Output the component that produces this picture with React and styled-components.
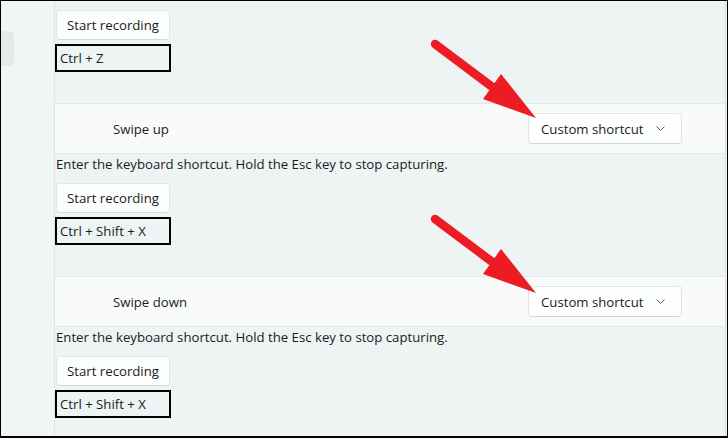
import styled, { createGlobalStyle } from "styled-components";

const GlobalStyle = createGlobalStyle`
    html, body {
        margin: 0;
        padding: 0;
        background: #ffffff;
    }
    * {
        box-sizing: border-box;
    }
`

function Arrow({ top }) {
    return (
        <ArrowBox top={top}>
            <svg width="120" height="90" viewBox="0 0 120 90">
                <line x1="10" y1="8" x2="70" y2="53" stroke="#ed1c24" strokeWidth="8.5" strokeLinecap="round" />
                <polygon points="58,63 76,38 111,82" fill="#ed1c24" />
            </svg>
        </ArrowBox>
    )
}

function Recorder({ keys }) {
    return (
        <>
            <RecordButton>Start recording</RecordButton>
            <KeyBox>{keys}</KeyBox>
        </>
    )
}

function Gesture({ label, keys }) {
    return (
        <Section>
            <Row>
                <RowLabel>{label}</RowLabel>
                <Dropdown>
                    <span>Custom shortcut</span>
                    <svg width="9" height="5" viewBox="0 0 9 5">
                        <polyline points="0.5,0.5 4.5,4.5 8.5,0.5" fill="none" stroke="#5c5c5c" strokeWidth="1" />
                    </svg>
                </Dropdown>
            </Row>
            <Hint>Enter the keyboard shortcut. Hold the Esc key to stop capturing.</Hint>
            <Recorder keys={keys} />
        </Section>
    )
}

export default function App() {
    return (
        <>
            <GlobalStyle />
            <Frame>
                <Sidebar>
                    <Pill />
                </Sidebar>
                <Content>
                    <Recorder keys="Ctrl + Z" />
                    <Gesture label="Swipe up" keys="Ctrl + Shift + X" />
                    <Gesture label="Swipe down" keys="Ctrl + Shift + X" />
                </Content>
                <Arrow top={35} />
                <Arrow top={210} />
            </Frame>
        </>
    )
}

const Frame = styled.div`
    position: relative;
    display: flex;
    width: 728px;
    height: 438px;
    overflow: hidden;
    border: 1px solid #000000;
    border-bottom-width: 2px;
    background: #eef3f3;
    font-family: 'Open Sans', 'Noto Sans', sans-serif;
    font-size: 13.2px;
    color: #1b1b1b;
`
const Sidebar = styled.div`
    width: 54px;
    flex-shrink: 0;
    padding-top: 30px;
    background: #f1f5f5;
    border-right: 1px solid #dfe4e4;
`
const Pill = styled.div`
    width: 13px;
    height: 35px;
    background: #e5e9e9;
    border-radius: 0 5px 5px 0;
`
const Content = styled.div`
    flex: 1;
    display: flex;
    flex-direction: column;
    align-items: flex-start;
    padding: 9px 0 0 0;
    border-right: 1px solid #dcdfdf;
    margin-right: 1px;
    overflow: hidden;
`
const RecordButton = styled.button`
    flex-shrink: 0;
    width: 114px;
    height: 30px;
    margin-left: 1px;
    padding: 0;
    background: #fcfdfd;
    border: 1px solid #e3e6e6;
    border-bottom-color: #d6d9d9;
    border-radius: 4px;
    font-family: inherit;
    font-size: 13.2px;
    color: #1b1b1b;
`
const KeyBox = styled.div`
    flex-shrink: 0;
    width: 116px;
    height: 28px;
    margin-top: 4px;
    margin-bottom: 31px;
    padding-left: 3px;
    display: flex;
    align-items: center;
    border: 2px solid #000000;
    line-height: 18px;
`
const Section = styled.div`
    flex-shrink: 0;
    display: flex;
    flex-direction: column;
    align-items: flex-start;
    width: 100%;
`
const Row = styled.div`
    flex-shrink: 0;
    width: 100%;
    height: 51px;
    display: flex;
    align-items: center;
    justify-content: space-between;
    padding: 0 43px 0 58px;
    background: #f9fbfb;
    border-top: 1px solid #e4e8e8;
    border-bottom: 1px solid #e4e8e8;
`
const RowLabel = styled.span`
    line-height: 18px;
`
const Dropdown = styled.div`
    width: 154px;
    height: 31px;
    display: flex;
    align-items: center;
    justify-content: space-between;
    padding: 0 16px 0 12px;
    background: #fdfefe;
    border: 1px solid #e2e5e5;
    border-bottom-color: #d5d8d8;
    border-radius: 4px;
`
const Hint = styled.p`
    flex-shrink: 0;
    margin: 1px 0 10px 1px;
    line-height: 18px;
`
const ArrowBox = styled.div`
    position: absolute;
    left: 424px;
    top: ${props => props.top}px;
    width: 120px;
    height: 90px;
    pointer-events: none;
`
